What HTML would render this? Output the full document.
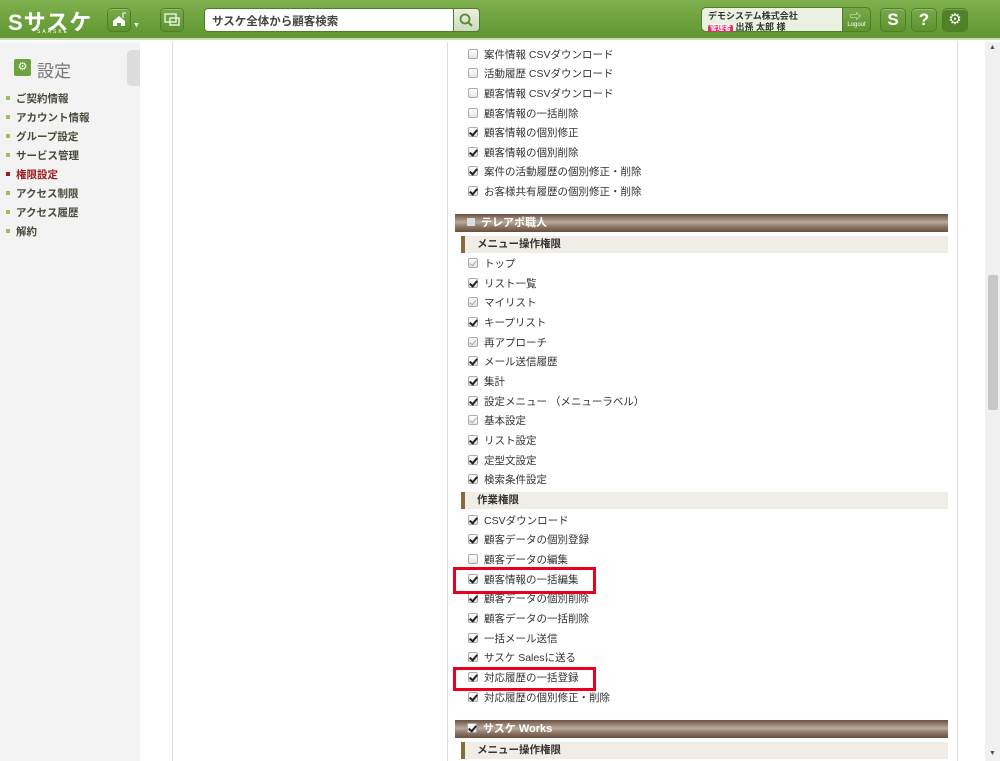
<!DOCTYPE html>
<html><head><meta charset="utf-8">
<style>
*{margin:0;padding:0;box-sizing:border-box}
body{width:1000px;height:761px;overflow:hidden;position:relative;background:#fff;font-family:"Liberation Sans","Noto Sans CJK JP",sans-serif;font-size:11px;color:#333}
.hdr{position:absolute;left:0;top:0;width:1000px;height:40px;background:linear-gradient(#7fb04e,#5f9630);border-bottom:2px solid #c9dcb4}
.btn{position:absolute;top:8px;height:24px;border:1px solid #4e7f28;border-radius:5px;background:linear-gradient(#77a94a,#5e932f);box-shadow:inset 0 1px 0 rgba(255,255,255,.25)}
.side{position:absolute;left:0;top:42px;width:140px;height:719px;background:#f3f3f3}
.tab{position:absolute;left:127px;top:50px;width:13px;height:36px;background:#dcdcdc;border-radius:5px 0 0 5px}
.nav{position:absolute;left:6px;font-size:10.5px;font-weight:bold;color:#4a4a3a}
.nav:before{content:"";display:inline-block;width:4px;height:4px;background:#9cc060;margin-right:6px;vertical-align:2px}
.nav.on{color:#9b1c1c}.nav.on:before{background:#9b1c1c}
.vl{position:absolute;top:42px;width:1px;height:719px;background:#ddd}
.it{position:absolute;left:468px;font-size:10.5px;color:#333;white-space:nowrap;line-height:12px}
.cb{display:inline-block;width:10px;height:10px;border:1px solid #aaa;border-radius:2px;background:linear-gradient(#fff,#e4e4e4);margin-right:6px;vertical-align:-1px;position:relative}
.cb.k:after{content:"";position:absolute;left:2px;top:0px;width:3px;height:6px;border:solid #222;border-width:0 2px 2px 0;transform:rotate(40deg)}
.cb.g:after{content:"";position:absolute;left:2px;top:0px;width:3px;height:6px;border:solid #aaa;border-width:0 1px 1px 0;transform:rotate(40deg)}
.band{position:absolute;left:455px;width:493px;height:18px;background:linear-gradient(#6a5040,#b9aa9c 45%,#8d7868 70%,#6a4e3c);color:#fff;font-weight:bold;font-size:11px;line-height:18px;padding-left:12px}
.sub{position:absolute;left:461px;width:487px;height:17px;background:#f0ede6;font-weight:bold;font-size:10.5px;line-height:17px;padding-left:12px;color:#333;border-left:4px solid #8a6a3a}
.red{position:absolute;left:453px;width:143px;border:3px solid #e8001c}
</style></head><body>
<div class="hdr">
 <div style="position:absolute;left:8px;top:5px;color:#fff;font-size:22px;font-weight:bold;letter-spacing:1px">Sサスケ</div>
 <div style="position:absolute;left:37px;top:29px;color:#fff;font-size:5px;letter-spacing:2px">SAASKE</div>
 <div class="btn" style="left:107px;width:24px"><svg width="22" height="22" viewBox="0 0 22 22"><path d="M5 12 L11 7 L17 12 V17 H13 V14 H9 V17 H5Z" fill="#fff"/><path d="M15 9 V4 H18" stroke="#fff" fill="none"/></svg></div>
 <div style="position:absolute;left:133px;top:22px;color:#fff;font-size:7px">▼</div>
 <div class="btn" style="left:160px;width:24px"><svg width="22" height="22" viewBox="0 0 22 22"><rect x="4" y="5" width="11" height="8" fill="none" stroke="#e6f0d8" stroke-width="1.5"/><rect x="9" y="9" width="9" height="7" fill="none" stroke="#e6f0d8" stroke-width="1.5"/></svg></div>
 <div style="position:absolute;left:204px;top:8px;width:276px;height:24px;background:#fff;border-radius:4px;border:1px solid #4e7f28"></div>
 <div style="position:absolute;left:212px;top:13px;font-size:11.5px;color:#444;font-weight:bold">サスケ全体から顧客検索</div>
 <div class="btn" style="left:453px;width:27px;border-radius:0 4px 4px 0;background:linear-gradient(#e8eee0,#cfdcc0)"><svg width="25" height="22" viewBox="0 0 25 22"><circle cx="11" cy="10" r="4.5" fill="none" stroke="#5a8a34" stroke-width="1.8"/><path d="M14 13 L18 17" stroke="#5a8a34" stroke-width="2"/></svg></div>
 <div style="position:absolute;left:701px;top:7px;width:170px;height:25px;background:#eaf1e0;border:1px solid #4e7f28;border-radius:5px"></div>
 <div style="position:absolute;left:708px;top:9px;font-size:9px;font-weight:bold;color:#333">デモシステム株式会社</div>
 <div style="position:absolute;left:708px;top:20px;font-size:9px;font-weight:bold;color:#333"><span style="background:#e0306a;color:#fff;font-size:7px;padding:0 2px;border-radius:2px">管理者</span> 出孫 太郎 様</div>
 <div style="position:absolute;left:842px;top:7px;width:29px;height:25px;background:linear-gradient(#77a94a,#5e932f);border:1px solid #4e7f28;border-radius:0 5px 5px 0;color:#fff;font-size:6px;text-align:center;padding-top:14px">Logout</div>
 <div style="position:absolute;left:850px;top:8px;color:#fff;font-size:11px">⇨</div>
 <div class="btn" style="left:880px;width:26px;color:#fff;font-size:17px;font-weight:bold;text-align:center;line-height:22px">S</div>
 <div class="btn" style="left:911px;width:26px;color:#fff;font-size:17px;font-weight:bold;text-align:center;line-height:22px">?</div>
 <div class="btn" style="left:942px;width:26px;background:#4f8227;color:#fff;font-size:15px;text-align:center;line-height:22px">⚙</div>
</div>
<div class="side"></div>
<div class="tab"></div>
<div style="position:absolute;left:14px;top:59px;width:17px;height:17px;background:#6da33d;border-radius:2px;color:#fff;font-size:11px;text-align:center;line-height:17px">⚙</div>
<div style="position:absolute;left:37px;top:57px;font-size:17px;color:#777">設定</div>
<div class="nav" style="top:91px">ご契約情報</div>
<div class="nav" style="top:110px">アカウント情報</div>
<div class="nav" style="top:129px">グループ設定</div>
<div class="nav" style="top:148px">サービス管理</div>
<div class="nav on" style="top:167px">権限設定</div>
<div class="nav" style="top:186px">アクセス制限</div>
<div class="nav" style="top:205px">アクセス履歴</div>
<div class="nav" style="top:224px">解約</div>
<div class="vl" style="left:172px"></div>
<div class="vl" style="left:447px"></div>
<div class="vl" style="left:957px"></div>
<div style="position:absolute;left:985px;top:42px;width:15px;height:719px;background:#f1f1f1"></div>
<div style="position:absolute;left:988px;top:275px;width:10px;height:135px;background:#c8c8c8;border-radius:2px"></div>
<div style="position:absolute;left:989px;top:44px;font-size:7px;color:#555">▲</div>
<div style="position:absolute;left:989px;top:750px;font-size:7px;color:#555">▼</div>

<div class="it" style="top:49px"><span class="cb"></span>案件情報 CSVダウンロード</div>
<div class="it" style="top:68px"><span class="cb"></span>活動履歴 CSVダウンロード</div>
<div class="it" style="top:88px"><span class="cb"></span>顧客情報 CSVダウンロード</div>
<div class="it" style="top:108px"><span class="cb"></span>顧客情報の一括削除</div>
<div class="it" style="top:127px"><span class="cb k"></span>顧客情報の個別修正</div>
<div class="it" style="top:147px"><span class="cb k"></span>顧客情報の個別削除</div>
<div class="it" style="top:166px"><span class="cb k"></span>案件の活動履歴の個別修正・削除</div>
<div class="it" style="top:186px"><span class="cb k"></span>お客様共有履歴の個別修正・削除</div>

<div class="band" style="top:214px"><span style="display:inline-block;width:8px;height:8px;background:#ddd;margin-right:6px"></span>テレアポ職人</div>
<div class="sub" style="top:236px">メニュー操作権限</div>
<div class="it" style="top:258px"><span class="cb g"></span>トップ</div>
<div class="it" style="top:278px"><span class="cb k"></span>リスト一覧</div>
<div class="it" style="top:297px"><span class="cb g"></span>マイリスト</div>
<div class="it" style="top:317px"><span class="cb k"></span>キープリスト</div>
<div class="it" style="top:337px"><span class="cb g"></span>再アプローチ</div>
<div class="it" style="top:356px"><span class="cb k"></span>メール送信履歴</div>
<div class="it" style="top:376px"><span class="cb k"></span>集計</div>
<div class="it" style="top:396px"><span class="cb k"></span>設定メニュー （メニューラベル）</div>
<div class="it" style="top:415px"><span class="cb g"></span>基本設定</div>
<div class="it" style="top:435px"><span class="cb k"></span>リスト設定</div>
<div class="it" style="top:455px"><span class="cb k"></span>定型文設定</div>
<div class="it" style="top:474px"><span class="cb k"></span>検索条件設定</div>
<div class="sub" style="top:492px">作業権限</div>
<div class="it" style="top:515px"><span class="cb k"></span>CSVダウンロード</div>
<div class="it" style="top:534px"><span class="cb k"></span>顧客データの個別登録</div>
<div class="it" style="top:554px"><span class="cb"></span>顧客データの編集</div>
<div class="it" style="top:574px"><span class="cb k"></span>顧客情報の一括編集</div>
<div class="it" style="top:593px"><span class="cb k"></span>顧客データの個別削除</div>
<div class="it" style="top:613px"><span class="cb k"></span>顧客データの一括削除</div>
<div class="it" style="top:633px"><span class="cb k"></span>一括メール送信</div>
<div class="it" style="top:652px"><span class="cb k"></span>サスケ Salesに送る</div>
<div class="it" style="top:672px"><span class="cb k"></span>対応履歴の一括登録</div>
<div class="it" style="top:692px"><span class="cb k"></span>対応履歴の個別修正・削除</div>
<div class="red" style="top:567px;height:27px"></div>
<div class="red" style="top:667px;height:24px"></div>

<div class="band" style="top:720px"><span class="cb k" style="margin-right:6px"></span>サスケ Works</div>
<div class="sub" style="top:742px">メニュー操作権限</div>
</body></html>
